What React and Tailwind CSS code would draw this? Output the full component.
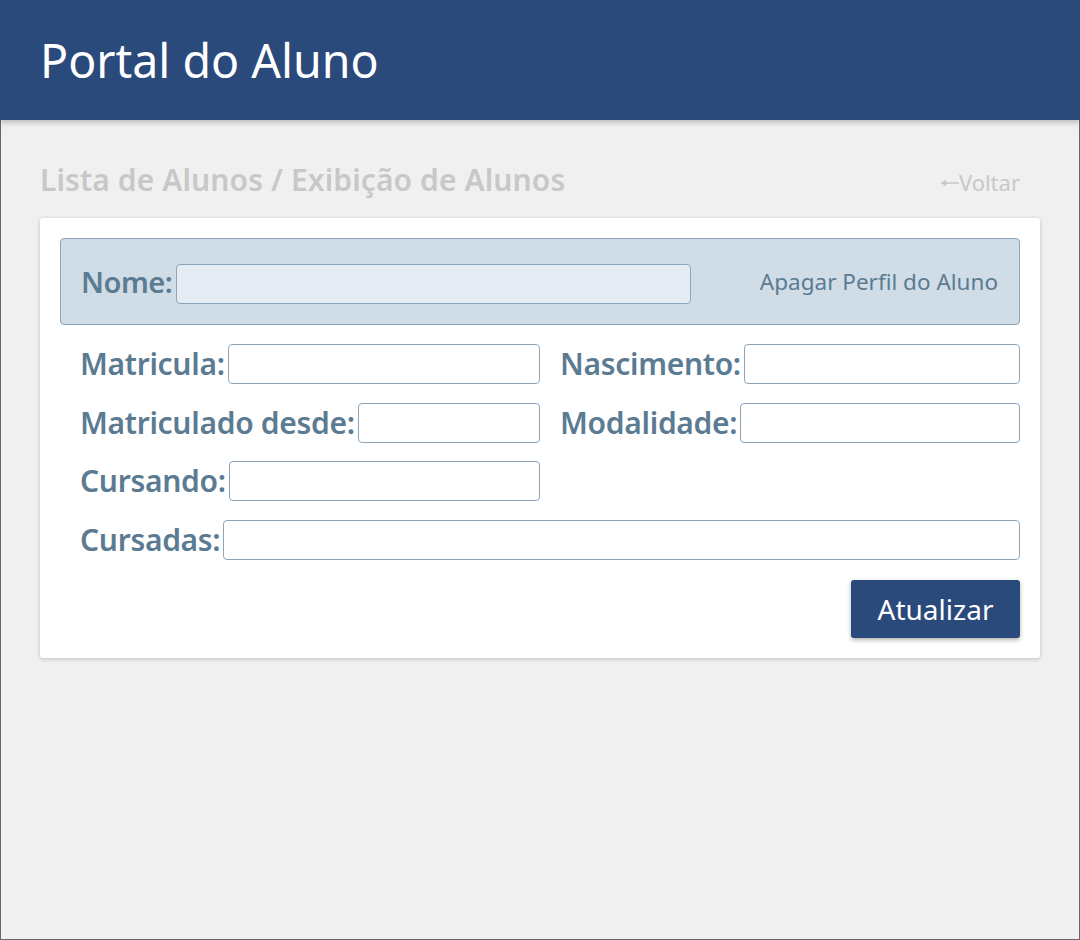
import React from "react";

const font = { fontFamily: '"Noto Sans", "Open Sans", sans-serif' };

const Field = ({ label, className = "" }) => (
  <div className={"flex items-center " + className}>
    <label className="text-[30px] font-semibold text-[#5b7b93] tracking-[-0.3px] leading-none whitespace-nowrap mr-[3px]">
      {label}
    </label>
    <input className="flex-1 min-w-0 h-[40px] rounded-[4px] border border-[#8ea5b9] bg-white outline-none" />
  </div>
);

export default function App() {
  return (
    <div className="min-h-[940px] flex flex-col bg-[#f0f0f0]" style={font}>
      {/* HEADER */}
      <header className="h-[120px] bg-[#2a4a7c] flex items-center px-10 shadow-[0_2px_6px_rgba(0,0,0,0.25)] relative z-10">
        <h1 className="text-[46.5px] text-white leading-none">Portal do Aluno</h1>
      </header>

      <main className="flex-1 border-x border-b border-[#666] px-[39px] pt-10">
        {/* BREADCRUMB */}
        <div className="h-[40px] flex items-center justify-between pr-5 mb-[18px]">
          <h2 className="text-[30px] font-semibold text-[#c8c8c8] tracking-[0.1px] -mt-[2px]">
            Lista de Alunos / Exibição de Alunos
          </h2>
          <a className="text-[22px] text-[#c8c8c8] mt-1 flex items-center">
            <svg width="19" height="10" viewBox="0 0 19 10" className="mt-[2px]">
              <path d="M1 5 H19" stroke="#c8c8c8" strokeWidth="1.6" />
              <path d="M1 5 L6 1.5 V8.5 Z" fill="#c8c8c8" />
            </svg>
            Voltar
          </a>
        </div>

        {/* CARD */}
        <div className="bg-white rounded-[3px] shadow-[0_1px_4px_rgba(0,0,0,0.2)] p-5">
          <div className="h-[87px] rounded-[4px] border border-[#8ea5b9] bg-[#d0dce6] flex items-center justify-between pl-5 pr-[21px] pt-1">
            <div className="flex items-center">
              <label className="text-[29px] font-semibold text-[#5b7b93] tracking-[-0.5px] leading-none mr-[4px] -mt-1">
                Nome:
              </label>
              <input className="w-[515px] h-[40px] rounded-[4px] border border-[#8ea5b9] bg-[#e5ecf3] outline-none" />
            </div>
            <span className="text-[22.5px] text-[#5b7b93] -mt-1">Apagar Perfil do Aluno</span>
          </div>

          <div className="grid grid-cols-2 gap-x-5 gap-y-[18.6px] pl-5 mt-[19px]">
            <Field label="Matricula:" />
            <Field label="Nascimento:" />
            <Field label="Matriculado desde:" />
            <Field label="Modalidade:" />
            <Field label="Cursando:" />
            <div />
            <Field label="Cursadas:" className="col-span-2" />
          </div>

          <div className="flex justify-end mt-5">
            <button className="w-[169px] h-[58px] rounded-[3px] bg-[#2a4a7c] text-white text-[28px] shadow-[0_2px_4px_rgba(0,0,0,0.3)]">
              Atualizar
            </button>
          </div>
        </div>
      </main>
    </div>
  );
}
